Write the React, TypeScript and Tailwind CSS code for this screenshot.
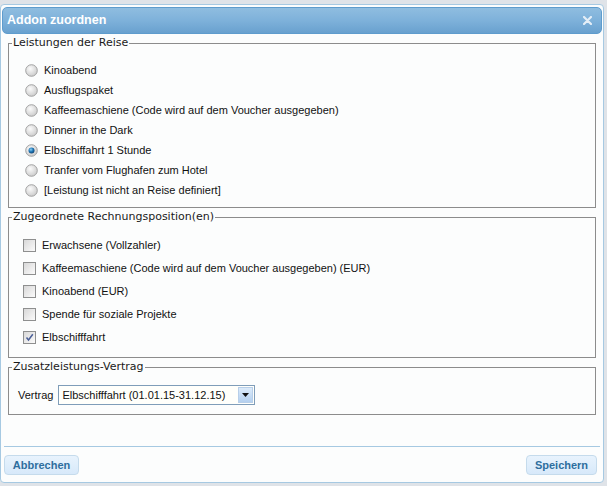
import React from "react";

const leistungen = [
  "Kinoabend",
  "Ausflugspaket",
  "Kaffeemaschiene (Code wird auf dem Voucher ausgegeben)",
  "Dinner in the Dark",
  "Elbschiffahrt 1 Stunde",
  "Tranfer vom Flughafen zum Hotel",
  "[Leistung ist nicht an Reise definiert]",
];

const positionen = [
  { label: "Erwachsene (Vollzahler)", checked: false },
  { label: "Kaffeemaschiene (Code wird auf dem Voucher ausgegeben) (EUR)", checked: false },
  { label: "Kinoabend (EUR)", checked: false },
  { label: "Spende für soziale Projekte", checked: false },
  { label: "Elbschifffahrt", checked: true },
];

function Radio({ on }: { on: boolean }) {
  return (
    <svg width="13" height="13" viewBox="0 0 13 13" className="shrink-0">
      <defs>
        <radialGradient id={on ? "rOn" : "rOff"} cx="0.4" cy="0.35" r="0.7">
          <stop offset="0" stopColor="#fbfbfb" />
          <stop offset="1" stopColor="#c9c9c9" />
        </radialGradient>
        <radialGradient id="dot" cx="0.4" cy="0.35" r="0.7">
          <stop offset="0" stopColor="#8fd0f5" />
          <stop offset="0.5" stopColor="#1f78b8" />
          <stop offset="1" stopColor="#0e3f6e" />
        </radialGradient>
      </defs>
      <circle cx="6.5" cy="6.5" r="5.8" fill={`url(#${on ? "rOn" : "rOff"})`} stroke="#9a9a9a" strokeWidth="0.9" />
      {on && <circle cx="6.5" cy="6.5" r="3" fill="url(#dot)" />}
    </svg>
  );
}

function Check({ on }: { on: boolean }) {
  return (
    <span className="flex h-[13px] w-[13px] shrink-0 items-center justify-center border border-[#8e8f8f] bg-gradient-to-br from-[#d8d8d8] to-[#fbfbfb]">
      {on && (
        <svg width="9" height="9" viewBox="0 0 9 9">
          <path d="M1.5 4.5 L3.5 7 L7.8 1.2" fill="none" stroke="#4a5f97" strokeWidth="1.5" />
        </svg>
      )}
    </span>
  );
}

function Group({ title, className, children }: { title: string; className: string; children: React.ReactNode }) {
  return (
    <fieldset className={`border border-[#8c8c8c] px-[3px] ${className}`}>
      <legend className="px-[1px] font-['DejaVu_Sans',sans-serif] text-[11px] leading-[14px] text-[#1a1a1a]">
        {title}
      </legend>
      {children}
    </fieldset>
  );
}

export default function App() {
  return (
    <div className="h-[486px] w-[607px] overflow-hidden bg-[#dfe3e8] pt-[4px] font-['Liberation_Sans',Arial,sans-serif]">
      <div className="flex h-[479px] w-[604px] flex-col rounded-[4px] border border-[#a6c9e2] bg-[#fcfdfd] px-[1px] pt-[2px]">
        {/* title bar */}
        <div className="flex h-[27px] shrink-0 items-center justify-between rounded-[5px] border border-[#5e9ccd] bg-gradient-to-b from-[#8fbde0] via-[#7eb1da] to-[#69a1cf] pl-[4px] pr-[9px]">
          <span className="text-[12.5px] font-bold text-white">Addon zuordnen</span>
          <svg width="9" height="9" viewBox="0 0 9 9">
            <path d="M1 1 L8 8 M8 1 L1 8" stroke="#e4eef7" strokeWidth="2.2" strokeLinecap="round" />
          </svg>
        </div>

        <div className="flex flex-1 flex-col pl-[6px] pr-[6px] pt-[2px]">
          <Group title="Leistungen der Reise" className="pb-[7px] pt-[10px]">
            {leistungen.map((l, i) => (
              <label key={l} className="flex h-[20px] items-center gap-[6px] pl-[13px] text-[11px] text-[#111]">
                <Radio on={i === 4} />
                <span>{l}</span>
              </label>
            ))}
          </Group>

          <Group title="Zugeordnete Rechnungsposition(en)" className="mt-[2px] pb-[8px] pt-[10px]">
            {positionen.map((p) => (
              <label key={p.label} className="flex h-[23px] items-center gap-[6px] pl-[11px] text-[11px] text-[#111]">
                <Check on={p.checked} />
                <span>{p.label}</span>
              </label>
            ))}
          </Group>

          <Group title="Zusatzleistungs-Vertrag" className="mt-[2px] pb-[9px] pt-[11px]">
            <div className="flex h-[20px] items-center pl-[6px] text-[11px] text-[#111]">
              <span className="mr-[5px]">Vertrag</span>
              <div className="flex h-[20px] items-stretch border border-[#7f9db9] bg-[#fffffb]">
                <span className="flex w-[178px] items-center pl-[3px] text-[11px]">
                  Elbschifffahrt (01.01.15-31.12.15)
                </span>
                <span className="m-[1px] flex w-[15px] items-center justify-center border border-[#b8cfe9] bg-gradient-to-b from-[#dcebfa] to-[#b4d0ef]">
                  <svg width="7" height="4" viewBox="0 0 7 4">
                    <path d="M0 0 H7 L3.5 4 Z" fill="#111" />
                  </svg>
                </span>
              </div>
            </div>
          </Group>
        </div>

        {/* button pane */}
        <div className="mx-[2px] flex h-[36px] shrink-0 items-start justify-between border-t border-[#a6c9e2] pt-[8px]">
          <button className="h-[20px] w-[75px] rounded-[4px] border border-[#c5dbec] bg-gradient-to-b from-[#e8f3fd] to-[#d7e9fa] text-[11px] font-bold text-[#2e6e9e]">
            Abbrechen
          </button>
          <button className="mr-[3px] h-[20px] w-[71px] rounded-[4px] border border-[#c5dbec] bg-gradient-to-b from-[#e8f3fd] to-[#d7e9fa] text-[11px] font-bold text-[#2e6e9e]">
            Speichern
          </button>
        </div>
      </div>
    </div>
  );
}
